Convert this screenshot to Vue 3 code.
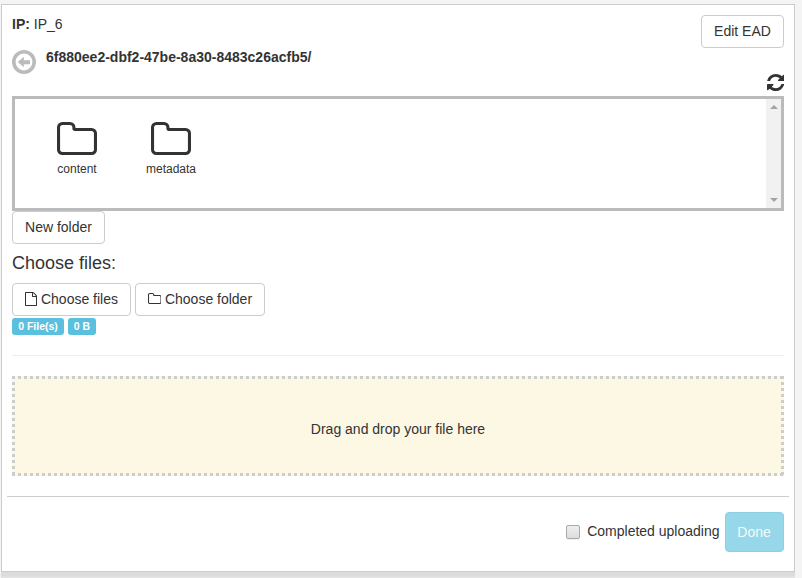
<script setup>
import { ref } from 'vue'

const folders = ['content', 'metadata']
const completed = ref(false)
const folderPath = 'M1536 1312V608q0-40-28-68t-68-28H736q-40 0-68-28t-28-68v-64q0-40-28-68t-68-28H224q-40 0-68 28t-28 68v960q0 40 28 68t68 28h1216q40 0 68-28t28-68zm128-704v704q0 92-66 158t-158 66H224q-92 0-158-66T0 1312V352q0-92 66-158t158-66h320q92 0 158 66t66 158v32h672q92 0 158 66t66 158z'
</script>

<template>
  <main class="panel">
    <div class="body">
      <header class="head">
        <div>
          <div class="ip"><b>IP:</b> IP_6</div>
          <div class="path">
            <svg class="back" viewBox="0 0 24 24">
              <circle cx="12" cy="12" r="10.2" fill="none" stroke="#bbb" stroke-width="3.6" />
              <path d="M5.8 12L11.8 6.8V10.2H18V14.2H11.8V17.3Z" fill="#bbb" />
            </svg>
            <b>6f880ee2-dbf2-47be-8a30-8483c26acfb5/</b>
          </div>
        </div>
        <div class="actions">
          <button class="btn edit">Edit EAD</button>
          <svg class="refresh" viewBox="0 0 1536 1536" preserveAspectRatio="none">
            <path fill="#333" d="M1511 928q0 5-1 7-64 268-268 434.5T764 1536q-146 0-282.500-55T238 1324l-129 129q-19 19-45 19t-45-19-19-45V960q0-26 19-45t45-19h448q26 0 45 19t19 45-19 45l-137 137q71 66 161 102t187 36q134 0 250-65t186-179q11-17 53-117 8-23 30-23h192q13 0 22.500 9.500t9.500 22.500zm25-800v448q0 26-19 45t-45 19h-448q-26 0-45-19t-19-45 19-45l138-138Q969 256 768 256q-134 0-250 65T332 500q-11 17-53 117-8 23-30 23H50q-13 0-22.500-9.500T18 608v-7q65-268 270-434.500T768 0q146 0 284 55.500T1297 212l130-129q19-19 45-19t45 19 19 45z" />
          </svg>
        </div>
      </header>

      <section class="browser">
        <div class="files">
          <div v-for="name in folders" :key="name" class="folder">
            <svg viewBox="0 128 1664 1408" preserveAspectRatio="none"><path fill="#333" :d="folderPath" /></svg>
            <span>{{ name }}</span>
          </div>
        </div>
        <div class="scrollbar">
          <svg viewBox="0 0 8 4"><path d="M0 4L4 0L8 4Z" fill="#a3a3a3" /></svg>
          <svg viewBox="0 0 8 4"><path d="M0 0H8L4 4Z" fill="#a3a3a3" /></svg>
        </div>
      </section>

      <button class="btn new">New folder</button>
      <h4>Choose files:</h4>
      <div class="choose">
        <button class="btn pick-files">
          <svg class="file-icon" viewBox="0 0 1536 1792"><path fill="#333" d="M1468 380q28 28 48 76t20 88v1152q0 40-28 68t-68 28H96q-40 0-68-28t-28-68V96q0-40 28-68T96 0h896q40 0 88 20t76 48zm-444-244v376h376q-10-29-22-41l-313-313q-12-12-41-22zm384 1528V640H992q-40 0-68-28t-28-68V128H128v1536h1280z" /></svg>
          Choose files
        </button>
        <button class="btn pick-folder">
          <svg class="folder-icon" viewBox="0 128 1664 1408" preserveAspectRatio="none"><path fill="#333" :d="folderPath" /></svg>
          Choose folder
        </button>
      </div>
      <div class="labels"><span class="count">0 File(s)</span><span class="size">0 B</span></div>
      <hr>
      <div class="drop">Drag and drop your file here</div>
    </div>

    <footer>
      <label><input v-model="completed" type="checkbox">Completed uploading</label>
      <button class="done" disabled>Done</button>
    </footer>
  </main>
  <div class="shade"></div>
</template>

<style>
body { background: #f4f4f4; }
</style>

<style scoped>
* { box-sizing: border-box; }
.panel {
  width: 794px;
  height: 568px;
  margin: 4px 0 0 1px;
  border: 1px solid #ccc;
  background: #fff;
  font: 14px/20px "Liberation Sans", Arial, sans-serif;
  color: #333;
}
.shade {
  width: 794px;
  height: 6px;
  margin-left: 1px;
  background: linear-gradient(#dcdcdc 60%, #e6e6e6);
}
.body { padding: 9px 10px 0; }
.head { display: flex; justify-content: space-between; height: 82px; }
.path { display: flex; gap: 10px; margin-top: 13px; }
.back { width: 24px; height: 24px; margin-top: 3px; }
.actions { display: flex; flex-direction: column; align-items: flex-end; padding-top: 1px; }
.btn {
  display: flex;
  align-items: center;
  justify-content: center;
  height: 33px;
  padding: 0 0 1px;
  border: 1px solid #ccc;
  border-radius: 4px;
  background: #fff;
  color: #333;
  font: inherit;
  white-space: nowrap;
}
.edit { width: 83px; }
.refresh { width: 17.5px; height: 17px; margin-top: 26px; }
.browser { display: flex; height: 115px; border: 3px solid #bbb; }
.files { flex: 1; display: flex; padding: 23px 0 0 15px; }
.folder {
  display: flex;
  flex-direction: column;
  align-items: center;
  width: 94px;
  font-size: 12px;
  line-height: 17px;
}
.folder svg { width: 40px; height: 33px; margin-bottom: 6px; }
.scrollbar {
  display: flex;
  flex-direction: column;
  justify-content: space-between;
  width: 15px;
  padding: 6px 3.5px 6px 3.5px;
  background: #f1f1f1;
}
.scrollbar svg { width: 8px; height: 4px; }
.new { width: 93px; }
h4 { margin: 9px 0 10px; font-size: 18px; line-height: 20px; font-weight: 400; }
.choose { display: flex; gap: 4px; }
.pick-files { width: 119px; gap: 4px; }
.pick-folder { width: 130px; gap: 3.5px; }
.file-icon { width: 12px; height: 14px; }
.folder-icon { width: 13.5px; height: 11px; margin-top: -1px; }
.labels {
  display: flex;
  gap: 4px;
  margin-top: 2px;
  color: #fff;
  font-size: 10.5px;
  font-weight: 700;
  line-height: 17px;
  text-align: center;
}
.labels span { height: 17px; border-radius: 3px; background: #5bc0de; }
.count { width: 52px; }
.size { width: 28px; }
hr { height: 1px; margin: 20px 0; border: 0; background: #eee; }
.drop {
  display: flex;
  align-items: center;
  justify-content: center;
  height: 100px;
  padding-top: 6px;
  background:
    linear-gradient(90deg, #ccc 50%, transparent 50%) 0 0 / 6px 3px repeat-x,
    linear-gradient(90deg, #ccc 50%, transparent 50%) 0 100% / 6px 3px repeat-x,
    linear-gradient(#ccc 50%, transparent 50%) 0 0 / 3px 6px repeat-y,
    linear-gradient(#ccc 50%, transparent 50%) 100% 0 / 3px 6px repeat-y,
    #fcf8e3;
}
footer {
  display: flex;
  justify-content: flex-end;
  align-items: flex-start;
  gap: 5.5px;
  margin: 20px 5px 0;
  padding: 15px 5px 0 0;
  border-top: 1px solid #ccc;
}
label { display: flex; align-items: flex-start; gap: 7px; padding-top: 9px; }
input {
  appearance: none;
  width: 14px;
  height: 14px;
  margin: 4px 0 0;
  border: 1px solid #aaa;
  border-radius: 2px;
  background: linear-gradient(#eee, #ddd);
  box-shadow: 0 1px 1px #eee;
}
.done {
  width: 59px;
  height: 40px;
  padding: 0 1px 0 0;
  border: 1px solid #8bd0e3;
  border-radius: 4px;
  background: #96d7e9;
  color: #f4fbfd;
  font: inherit;
}
</style>
